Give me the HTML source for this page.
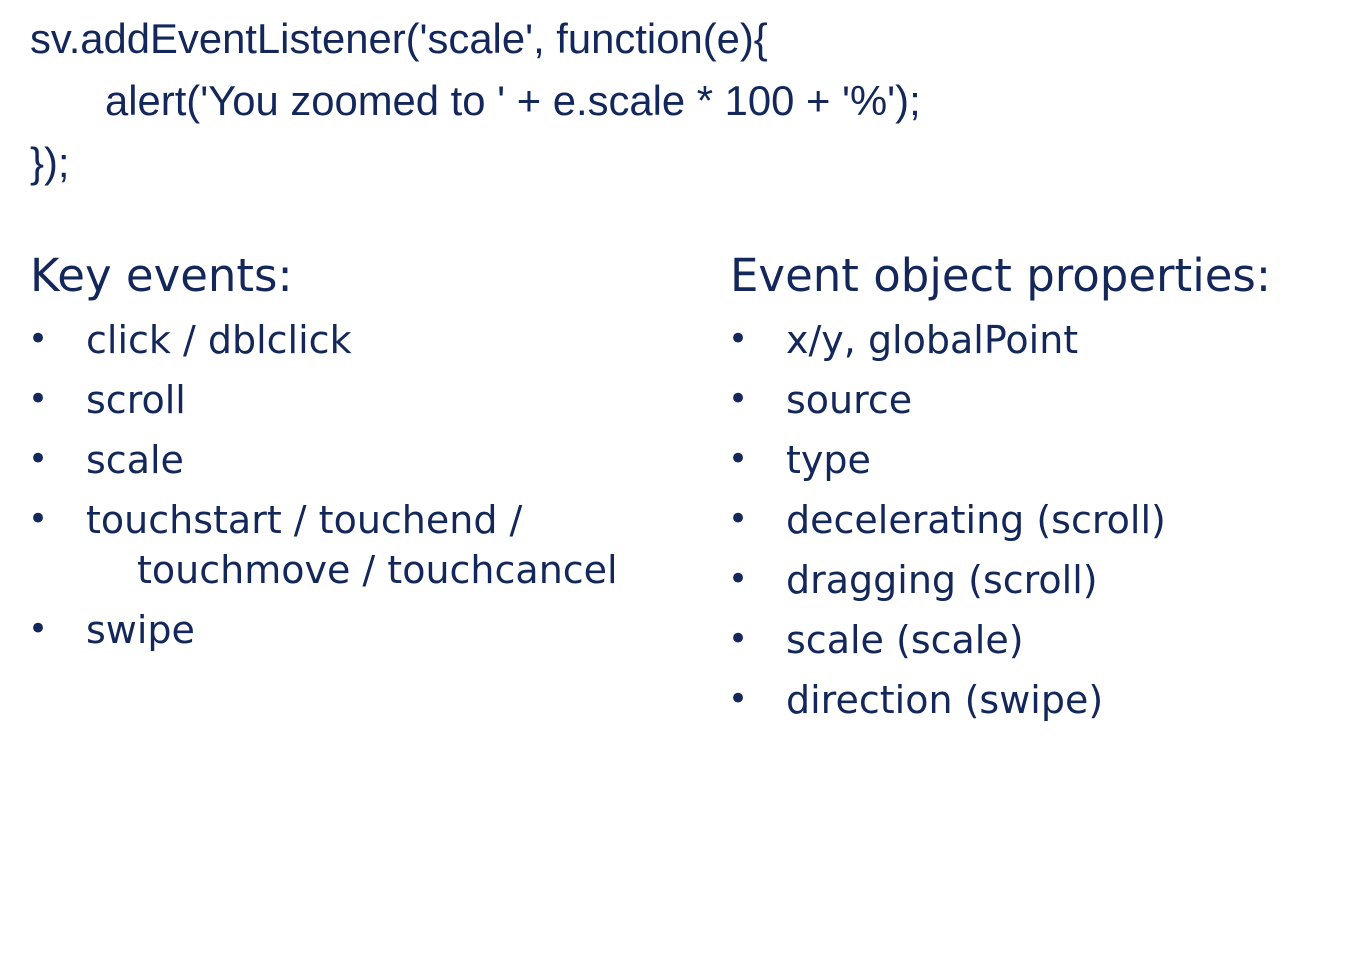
<!DOCTYPE html>
<html><head><style>
body{margin:0;width:1365px;height:980px;background:#fff;position:relative;overflow:hidden;color:#13275a}
.c{position:absolute;font-family:"Liberation Sans",Arial,sans-serif;font-size:41.8px;white-space:pre;line-height:1}
.h,.i,.b{position:absolute;font-family:"DejaVu Sans",sans-serif;white-space:pre;line-height:1}
.h{font-size:45px;letter-spacing:0px}
.i{font-size:38px;letter-spacing:0px}
.b{font-size:34px}
</style></head><body>
<div class="c" style="left:30px;top:18px">sv.addEventListener('scale', function(e){</div>
<div class="c" style="left:105px;top:80px">alert('You zoomed to ' + e.scale * 100 + '%');</div>
<div class="c" style="left:30px;top:142px">});</div>

<div class="h" style="left:30px;top:253px">Key events:</div>
<div class="h" style="left:730px;top:253px">Event object properties:</div>

<div class="b" style="left:28px;top:322px">•</div><div class="i" style="left:86px;top:321px">click / dblclick</div>
<div class="b" style="left:28px;top:382px">•</div><div class="i" style="left:86px;top:381px">scroll</div>
<div class="b" style="left:28px;top:442px">•</div><div class="i" style="left:86px;top:441px">scale</div>
<div class="b" style="left:28px;top:502px">•</div><div class="i" style="left:86px;top:501px">touchstart / touchend /</div>
<div class="i" style="left:137px;top:551px">touchmove / touchcancel</div>
<div class="b" style="left:28px;top:612px">•</div><div class="i" style="left:86px;top:611px">swipe</div>

<div class="b" style="left:728px;top:322px">•</div><div class="i" style="left:786px;top:321px">x/y, globalPoint</div>
<div class="b" style="left:728px;top:382px">•</div><div class="i" style="left:786px;top:381px">source</div>
<div class="b" style="left:728px;top:442px">•</div><div class="i" style="left:786px;top:441px">type</div>
<div class="b" style="left:728px;top:502px">•</div><div class="i" style="left:786px;top:501px">decelerating (scroll)</div>
<div class="b" style="left:728px;top:562px">•</div><div class="i" style="left:786px;top:561px">dragging (scroll)</div>
<div class="b" style="left:728px;top:622px">•</div><div class="i" style="left:786px;top:621px">scale (scale)</div>
<div class="b" style="left:728px;top:682px">•</div><div class="i" style="left:786px;top:681px">direction (swipe)</div>
</body></html>
